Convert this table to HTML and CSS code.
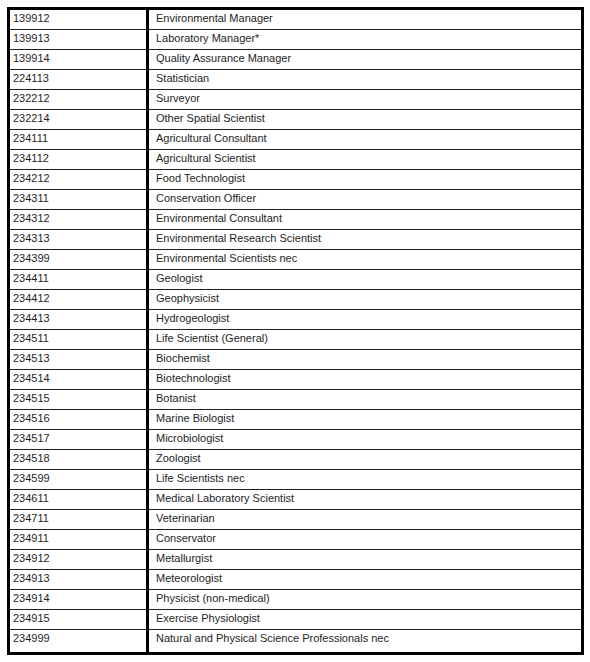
FILE: index.html
```html
<!DOCTYPE html>
<html>
<head>
<meta charset="utf-8">
<link rel="stylesheet" href="styles.css">
</head>
<body>
<table class="occ">
<tbody>
<tr><td class="code">139912</td><td class="name">Environmental Manager</td></tr>
<tr><td class="code">139913</td><td class="name">Laboratory Manager*</td></tr>
<tr><td class="code">139914</td><td class="name">Quality Assurance Manager</td></tr>
<tr><td class="code">224113</td><td class="name">Statistician</td></tr>
<tr><td class="code">232212</td><td class="name">Surveyor</td></tr>
<tr><td class="code">232214</td><td class="name">Other Spatial Scientist</td></tr>
<tr><td class="code">234111</td><td class="name">Agricultural Consultant</td></tr>
<tr><td class="code">234112</td><td class="name">Agricultural Scientist</td></tr>
<tr><td class="code">234212</td><td class="name">Food Technologist</td></tr>
<tr><td class="code">234311</td><td class="name">Conservation Officer</td></tr>
<tr><td class="code">234312</td><td class="name">Environmental Consultant</td></tr>
<tr><td class="code">234313</td><td class="name">Environmental Research Scientist</td></tr>
<tr><td class="code">234399</td><td class="name">Environmental Scientists nec</td></tr>
<tr><td class="code">234411</td><td class="name">Geologist</td></tr>
<tr><td class="code">234412</td><td class="name">Geophysicist</td></tr>
<tr><td class="code">234413</td><td class="name">Hydrogeologist</td></tr>
<tr><td class="code">234511</td><td class="name">Life Scientist (General)</td></tr>
<tr><td class="code">234513</td><td class="name">Biochemist</td></tr>
<tr><td class="code">234514</td><td class="name">Biotechnologist</td></tr>
<tr><td class="code">234515</td><td class="name">Botanist</td></tr>
<tr><td class="code">234516</td><td class="name">Marine Biologist</td></tr>
<tr><td class="code">234517</td><td class="name">Microbiologist</td></tr>
<tr><td class="code">234518</td><td class="name">Zoologist</td></tr>
<tr><td class="code">234599</td><td class="name">Life Scientists nec</td></tr>
<tr><td class="code">234611</td><td class="name">Medical Laboratory Scientist</td></tr>
<tr><td class="code">234711</td><td class="name">Veterinarian</td></tr>
<tr><td class="code">234911</td><td class="name">Conservator</td></tr>
<tr><td class="code">234912</td><td class="name">Metallurgist</td></tr>
<tr><td class="code">234913</td><td class="name">Meteorologist</td></tr>
<tr><td class="code">234914</td><td class="name">Physicist (non-medical)</td></tr>
<tr><td class="code">234915</td><td class="name">Exercise Physiologist</td></tr>
<tr class="last"><td class="code">234999</td><td class="name">Natural and Physical Science Professionals nec</td></tr>
</tbody>
</table>
</body>
</html>
```

FILE: styles.css
```css
html, body {
  margin: 0;
  padding: 0;
  background: #ffffff;
}

body {
  padding: 7px 0 0 7px;
  font-family: "Liberation Sans", Arial, sans-serif;
  font-size: 11px;
  color: #1e1e1e;
}

.occ {
  border-collapse: separate;
  border-spacing: 0;
  border: 3px solid #000;
  width: 577px;
  table-layout: fixed;
}

.occ td {
  height: 19px;
  padding: 0;
  line-height: 16px;
  vertical-align: top;
  border-bottom: 1px solid #222;
  white-space: nowrap;
  box-sizing: content-box;
}

.occ .code {
  width: 133px;
  padding-left: 3px;
  border-right: 3px solid #000;
}

.occ .name {
  padding-left: 7px;
}

.occ tr.last td {
  border-bottom: none;
  height: 22px;
}
```
